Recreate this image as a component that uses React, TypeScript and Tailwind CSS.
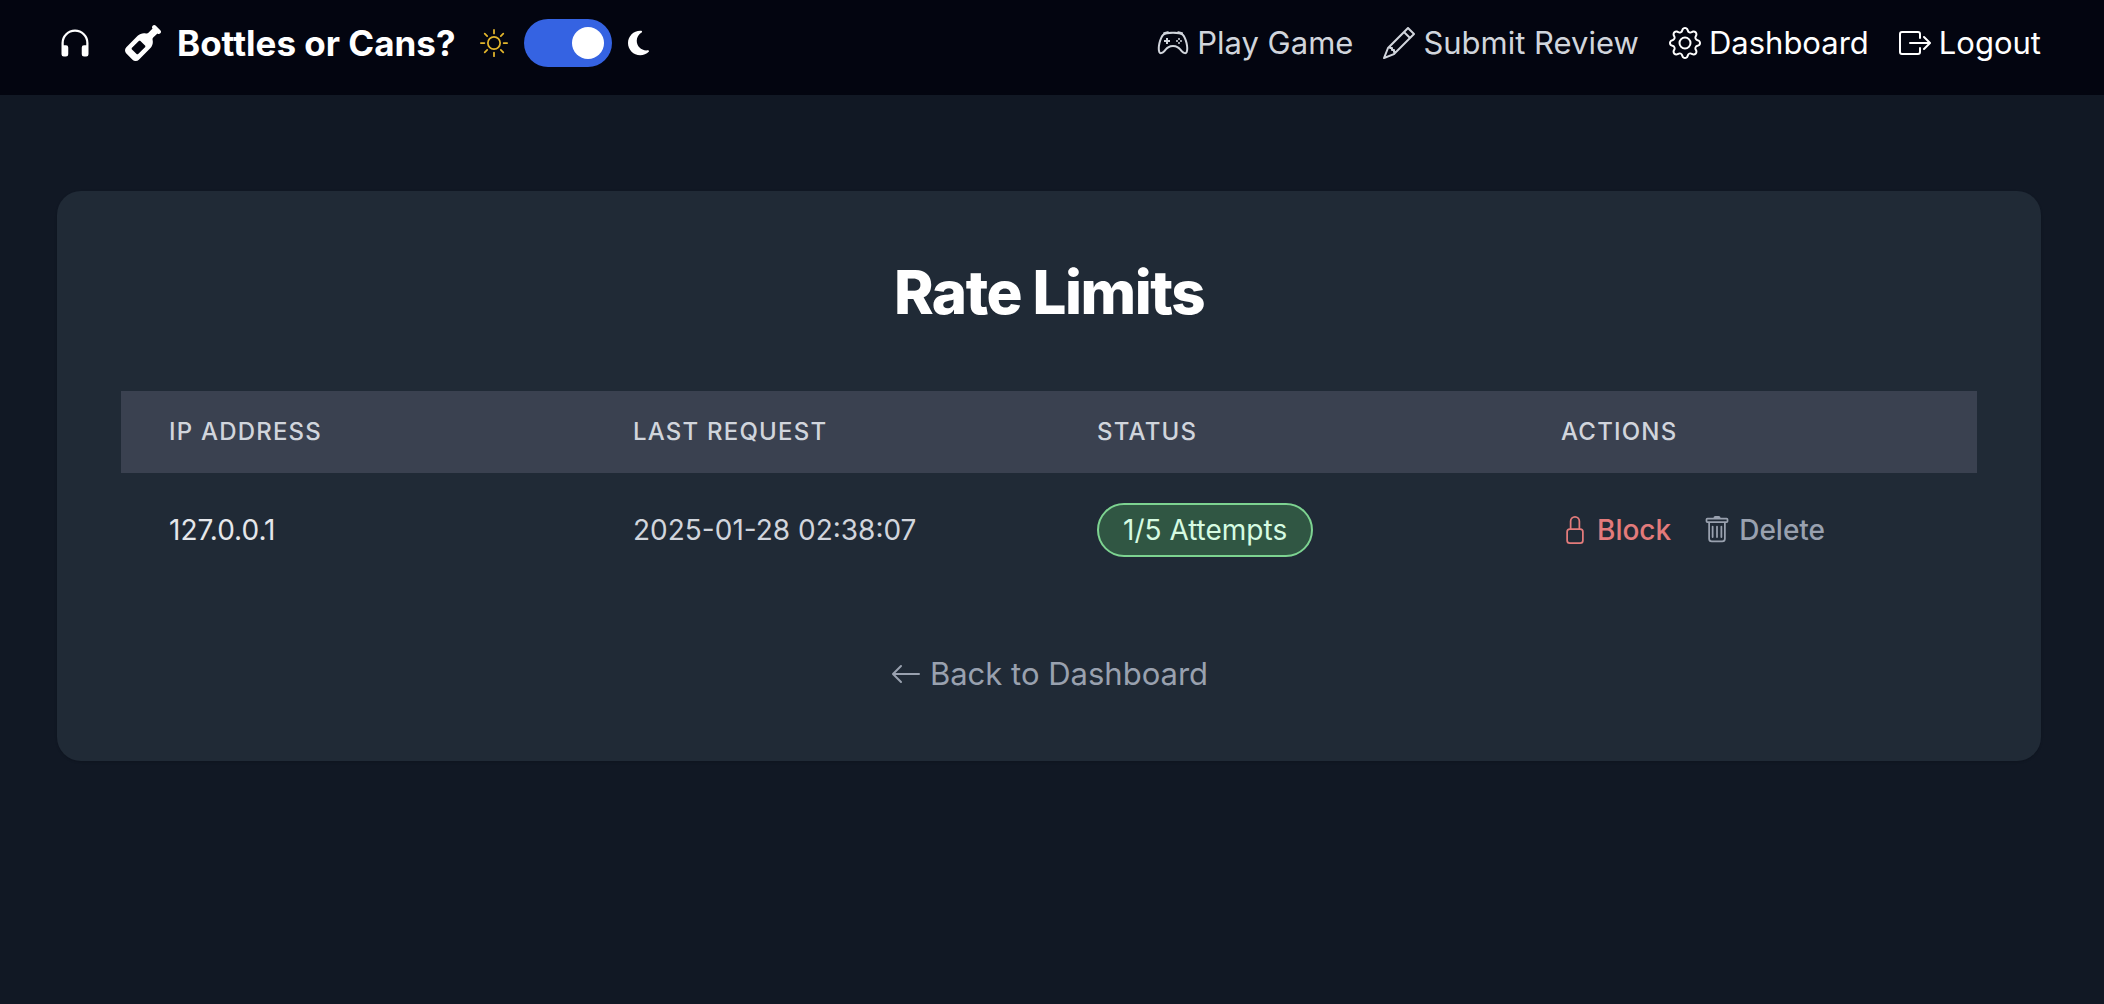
import { useState } from "react";
import type { ReactNode } from "react";
import {
  BsArrowLeft,
  BsBoxArrowRight,
  BsController,
  BsGear,
  BsHeadphones,
  BsLock,
  BsPencil,
  BsSun,
  BsTrash,
} from "react-icons/bs";
import { FaMoon, FaWineBottle } from "react-icons/fa6";

interface RateLimit {
  ip: string;
  lastRequest: string;
  attempts: number;
  limit: number;
}

const columns = ["IP Address", "Last Request", "Status", "Actions"];

const rateLimits: RateLimit[] = [
  { ip: "127.0.0.1", lastRequest: "2025-01-28 02:38:07", attempts: 1, limit: 5 },
];

function NavLink({ icon, label, active }: { icon: ReactNode; label: string; active?: boolean }) {
  return (
    <a
      href="#"
      className={`flex items-center gap-2 text-[31px] leading-10 whitespace-nowrap ${active ? "text-white" : "text-gray-300"}`}
    >
      {icon}
      <span>{label}</span>
    </a>
  );
}

function ThemeSwitch() {
  const [dark, setDark] = useState(true);
  return (
    <div className="flex items-center gap-4">
      <BsSun className="size-7 text-[#e3b62c]" />
      <label className="relative block h-12 w-[88px] cursor-pointer">
        <input
          type="checkbox"
          role="switch"
          aria-label="Dark mode"
          checked={dark}
          onChange={(e) => setDark(e.target.checked)}
          className="peer block h-12 w-[88px] cursor-pointer appearance-none rounded-full bg-gray-600 checked:bg-[#3563e2]"
        />
        <span className="pointer-events-none absolute top-2 left-2 size-8 rounded-full bg-white peer-checked:translate-x-10" />
      </label>
      <FaMoon className="h-7 w-[21px] text-white" />
    </div>
  );
}

export default function App() {
  return (
    <div className="min-h-screen bg-[#111824] font-[Inter,sans-serif] text-white">
      <nav className="flex h-[95px] items-start justify-between bg-[#030510] pr-[63px] pl-[57px]">
        <div className="flex h-[86px] items-center">
          <a href="#" aria-label="Listen">
            <BsHeadphones className="size-9" />
          </a>
          <a href="#" className="ml-8 flex items-center gap-4 text-[35px] leading-10 font-bold whitespace-nowrap">
            <FaWineBottle className="size-9" />
            <span>Bottles or Cans?</span>
          </a>
          <div className="ml-6">
            <ThemeSwitch />
          </div>
        </div>
        <div className="flex h-[86px] items-center gap-[30px]">
          <NavLink icon={<BsController className="size-8" />} label="Play Game" />
          <NavLink icon={<BsPencil className="size-8" />} label="Submit Review" />
          <NavLink icon={<BsGear className="size-8" />} label="Dashboard" active />
          <NavLink icon={<BsBoxArrowRight className="size-8" />} label="Logout" active />
        </div>
      </nav>

      <main className="pt-24 pr-[63px] pl-[57px]">
        <section className="rounded-3xl bg-[#202a36] p-16 shadow-sm">
          <h1 className="text-center text-[60px] leading-[74px] font-extrabold tracking-tight">Rate Limits</h1>
          <table className="mt-[62px] w-full table-fixed">
            <thead className="bg-[#3a4150]">
              <tr>
                {columns.map((c) => (
                  <th
                    key={c}
                    scope="col"
                    className="h-[82px] px-12 text-left text-[24px] leading-8 font-medium tracking-wider text-gray-300 uppercase"
                  >
                    {c}
                  </th>
                ))}
              </tr>
            </thead>
            <tbody>
              {rateLimits.map((r) => (
                <tr key={r.ip} className="text-[28px] leading-10">
                  <td className="h-[114px] px-12 text-gray-200">{r.ip}</td>
                  <td className="px-12 whitespace-nowrap text-gray-300">{r.lastRequest}</td>
                  <td className="px-12">
                    <span className="inline-flex h-[54px] items-center rounded-full border-2 border-[#7dd391] bg-[#305643] px-6 whitespace-nowrap text-[#d6fbe2]">
                      {`${r.attempts}/${r.limit} Attempts`}
                    </span>
                  </td>
                  <td className="px-12">
                    <div className="flex items-center gap-8 font-medium">
                      <button type="button" className="flex items-center gap-2 text-[#e37b7b]">
                        <BsLock className="size-7" />
                        Block
                      </button>
                      <button type="button" className="flex items-center gap-2 text-gray-400">
                        <BsTrash className="size-7" />
                        Delete
                      </button>
                    </div>
                  </td>
                </tr>
              ))}
            </tbody>
          </table>
          <div className="mt-16 flex justify-center">
            <a href="#" className="flex items-center gap-2 text-[31px] leading-[46px] text-gray-400">
              <BsArrowLeft className="size-8" />
              Back to Dashboard
            </a>
          </div>
        </section>
      </main>
    </div>
  );
}
